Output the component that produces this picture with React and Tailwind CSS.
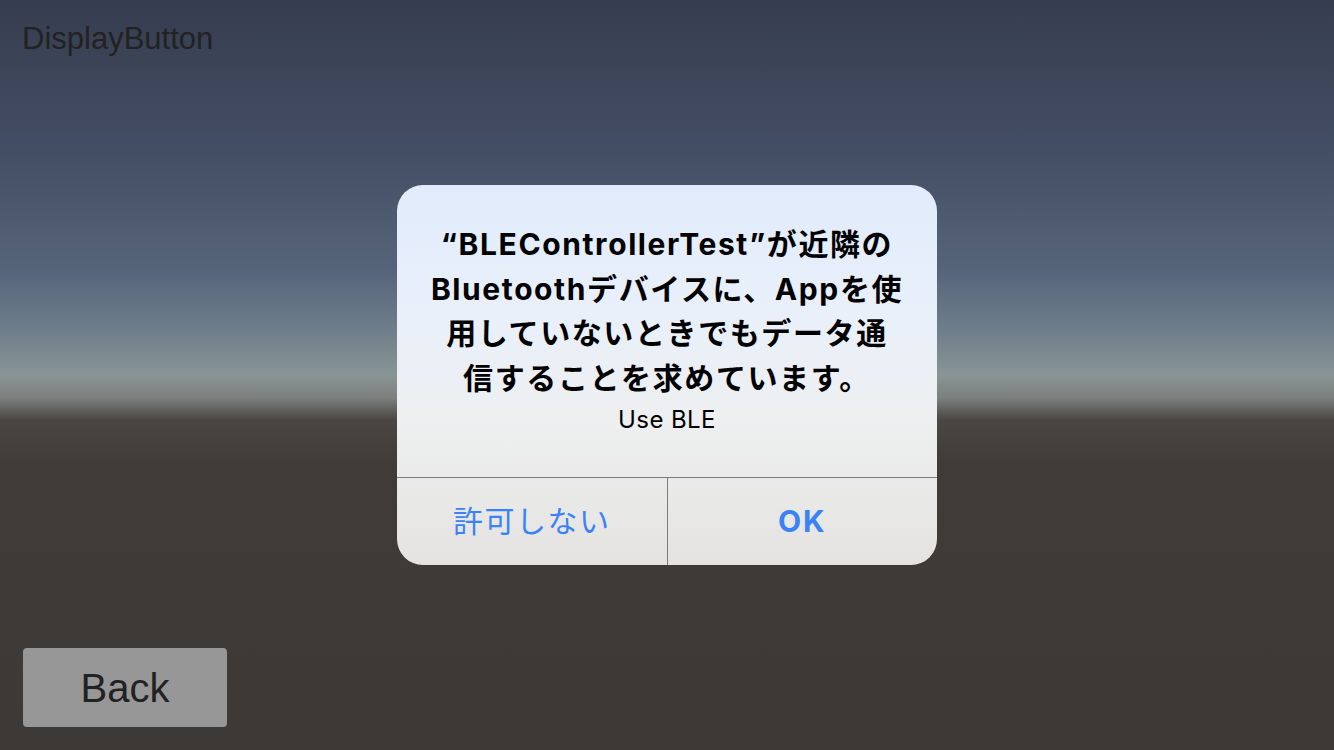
import React from 'react';

function AlertDialog() {
  return (
    <div
      className="absolute left-[397px] top-[185px] w-[540px] h-[380px] rounded-[26px] overflow-hidden flex flex-col bg-[linear-gradient(to_bottom,#e1ebfb_0%,#e9f0fa_35%,#eeeff0_62%,#e4e3e1_100%)]"
      style={{ fontFamily: '"Inter", "Noto Sans CJK JP", sans-serif' }}
    >
      {/* Message */}
      <div className="flex-1 flex flex-col items-center pt-[37px] px-4">
        <p className="text-[30px] leading-[44.5px] font-bold text-black text-center tracking-[1.6px] whitespace-nowrap">
          “BLEControllerTest”が近隣の
          <br />
          Bluetoothデバイスに、Appを使
          <br />
          用していないときでもデータ通
          <br />
          信することを求めています。
        </p>
        <p className="mt-[5px] text-[24px] leading-[30px] text-black tracking-[0.4px]">Use BLE</p>
      </div>

      {/* Buttons */}
      <div className="h-[88px] flex border-t border-[#7d7a77]">
        <button className="flex-1 flex items-center justify-center text-[30px] tracking-[1.5px] text-[#3a82f7] border-r border-[#7d7a77]">
          許可しない
        </button>
        <button className="flex-1 flex items-center justify-center text-[30px] tracking-[2px] font-bold text-[#3a82f7]">
          OK
        </button>
      </div>
    </div>
  );
}

export default function App() {
  return (
    <div
      className="relative w-[1334px] h-[750px] overflow-hidden flex flex-col justify-between bg-[linear-gradient(to_bottom,#363d4f_0%,#434d63_20%,#56647a_36%,#6e7e8a_44%,#899594_50%,#7c807e_53%,#4a4643_56%,#3f3b38_62%,#3d3936_100%)]"
      style={{ fontFamily: '"Liberation Sans", Arial, sans-serif' }}
    >
      <div className="pl-[22px] pt-[21px] text-[31px] leading-[36px] text-[#222222]">DisplayButton</div>

      <div className="pl-[23px] pb-[23px]">
        <button className="w-[204px] h-[79px] rounded-[4px] bg-[#979797] text-[40px] text-[#222222] flex items-center justify-center">
          Back
        </button>
      </div>

      <AlertDialog />
    </div>
  );
}
